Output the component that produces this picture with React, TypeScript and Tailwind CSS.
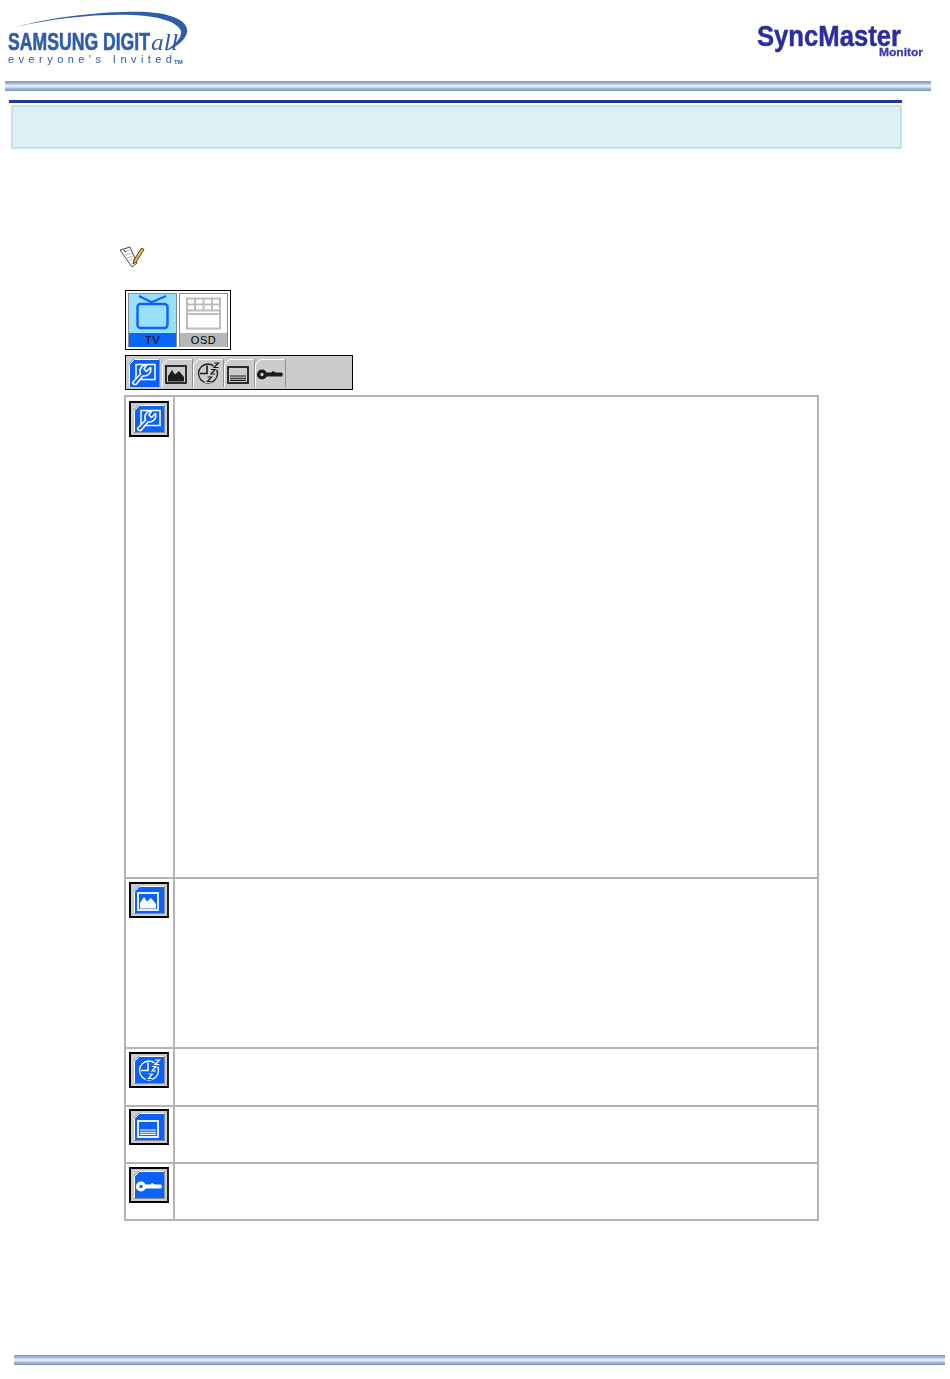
type IconKind = "setup" | "picture" | "timer" | "caption" | "key";

const ICONS: IconKind[] = ["setup", "picture", "timer", "caption", "key"];

const BLUE = "#0a62fb";

const ROWS: { kind: IconKind; height: string; pad: string }[] = [
  { kind: "setup", height: "h-[480px]", pad: "pt-[4px]" },
  { kind: "picture", height: "h-[170px]", pad: "pt-[3px]" },
  { kind: "timer", height: "h-[58px]", pad: "pt-[3px]" },
  { kind: "caption", height: "h-[57px]", pad: "pt-[2px]" },
  { kind: "key", height: "h-[57px]", pad: "pt-[3px]" },
];

function Glyph({ kind, color, bg }: { kind: IconKind; color: string; bg: string }) {
  if (kind === "setup") {
    return (
      <g>
        <rect x="7" y="5.5" width="19" height="15" fill="none" stroke={color} strokeWidth="1.5" />
        <path
          d="M5 25.5 L3.5 23.5 L11.5 15 C9.5 10 13 5.5 17.5 6 L15 10 L17.5 12.5 L21.5 8.5 C23 14 18.5 17.5 14 17 L7 25.5 Z"
          fill={bg}
          stroke={color}
          strokeWidth="1.6"
          strokeLinejoin="round"
        />
      </g>
    );
  }
  if (kind === "picture") {
    return (
      <g>
        <rect x="4" y="7" width="20" height="17" fill="none" stroke={color} strokeWidth="1.8" />
        <path d="M6 22.5 L6 17 L10 11 L13 15.5 L17 12 L22 18 L22 22.5 Z" fill={color} />
      </g>
    );
  }
  if (kind === "timer") {
    const zeds = "M21 4 H25.5 L21 8.5 H25.5 M18 10.5 H22 L18 15 H22 M14.5 18 H18.5 L14.5 22.5 H18.5";
    return (
      <g>
        <circle cx="15" cy="14.5" r="9.5" fill="none" stroke={color} strokeWidth="1.3" />
        <path d="M14 6.5 L14 14.5 L7 14.5" fill="none" stroke={color} strokeWidth="1.6" />
        <path d={zeds} fill="none" stroke={bg} strokeWidth="3" />
        <path d={zeds} fill="none" stroke={color} strokeWidth="1.2" />
      </g>
    );
  }
  if (kind === "caption") {
    return (
      <g>
        <rect x="4" y="8" width="20" height="16" fill="none" stroke={color} strokeWidth="1.8" />
        <path d="M6 17 H22 M6 19.2 H22 M6 21.4 H22" stroke={color} strokeWidth="1.1" />
      </g>
    );
  }
  return (
    <g>
      <circle cx="7" cy="15.5" r="3.4" fill="none" stroke={color} strokeWidth="3.4" />
      <path d="M11 13.5 H16 L18 12 L21 13.5 H27 L28 15.5 L27 17.5 H11 Z" fill={color} />
    </g>
  );
}

function Tab({ kind, active, raised }: { kind: IconKind; active?: boolean; raised?: boolean }) {
  const bg = active ? BLUE : "#cccccc";
  return (
    <svg width="31" height="28" viewBox="0 0 31 28" className="shrink-0">
      <path d="M0 28 V5 L5 0 H30 V28 Z" fill={bg} />
      <path d="M0.5 28 V5.5 L5.5 0.5 H30" fill="none" stroke="#ffffff" />
      <path d="M30.5 0 V28" stroke="#8f8f8f" />
      {raised && <path d="M0 27.5 H31" stroke="#8f8f8f" />}
      <Glyph kind={kind} color={active ? "#ffffff" : "#1c1c1c"} bg={bg} />
    </svg>
  );
}

function CellIcon({ kind }: { kind: IconKind }) {
  return (
    <div className="flex h-[36px] w-[40px] items-center justify-center border-2 border-black border-r-[#222222] bg-[#cccccc]">
      <Tab kind={kind} active raised />
    </div>
  );
}

function StripeBar({ width, margin }: { width: string; margin: string }) {
  return (
    <div
      className={`h-[10px] bg-[linear-gradient(to_bottom,#7893c6_0%,#a9bbdc_25%,#f4f6fb_50%,#a9bbdc_75%,#7191c6_100%)] ${width} ${margin}`}
    />
  );
}

function SamsungLogo() {
  return (
    <svg width="190" height="58" viewBox="0 0 190 58" className="blur-[0.4px]">
      <path
        d="M8 17 C55 5 105 1 140 2 C168 4 182 12 180 23 C177 32 168 38 158 41 C168 35 175 28 174 21 C170 11 150 6 125 5 C85 4 45 9 8 17 Z"
        fill="#2f5cab"
      />
      <text
        x="1"
        y="40"
        textLength="142"
        lengthAdjust="spacingAndGlyphs"
        fontFamily="Liberation Sans"
        fontWeight="700"
        fontSize="24"
        fill="#2f5cab"
        stroke="#2f5cab"
        strokeWidth="0.6"
      >
        SAMSUNG DIGIT
      </text>
      <text
        x="144"
        y="40"
        textLength="27"
        lengthAdjust="spacingAndGlyphs"
        fontFamily="Liberation Serif"
        fontStyle="italic"
        fontSize="24"
        fill="#2f5cab"
      >
        all
      </text>
      <text x="1" y="53" textLength="164" fontFamily="Liberation Sans" fontSize="11" fill="#2f5cab">
        everyone's Invited
      </text>
      <text x="167" y="54" fontFamily="Liberation Sans" fontWeight="700" fontSize="6" fill="#2f5cab">
        TM
      </text>
    </svg>
  );
}

function SyncMasterLogo() {
  return (
    <svg width="170" height="38" viewBox="0 0 170 38" className="blur-[0.5px]">
      <text
        x="2"
        y="25"
        textLength="144"
        lengthAdjust="spacingAndGlyphs"
        fontFamily="Liberation Sans"
        fontWeight="700"
        fontSize="30"
        fill="#2b2f9e"
        stroke="#2b2f9e"
        strokeWidth="0.5"
      >
        SyncMaster
      </text>
      <text
        x="124"
        y="35"
        textLength="44"
        lengthAdjust="spacingAndGlyphs"
        fontFamily="Liberation Sans"
        fontWeight="700"
        fontSize="11"
        fill="#3a3ea6"
        stroke="#3a3ea6"
        strokeWidth="0.3"
      >
        Monitor
      </text>
    </svg>
  );
}

function NoteIcon() {
  return (
    <svg width="26" height="22" viewBox="0 0 26 22">
      <path d="M1 4 L11 1 L18 17 L13 21 Z" fill="#ffffff" stroke="#4a4a4a" strokeWidth="1" />
      <path d="M5 6 L11 4 M6.5 9 L13 7 M8 12 L14 10 M9.5 15 L15 13" stroke="#a8a8a8" strokeWidth="0.8" />
      <path d="M4.5 4 L7 6" stroke="#c0392b" strokeWidth="1.2" />
      <path d="M15 14 L22.5 2 L25 3.5 L17 16 L14 18 Z" fill="#f4c430" stroke="#2b2b2b" strokeWidth="0.9" />
    </svg>
  );
}

function ModeTabs() {
  return (
    <div className="ml-[125px] flex h-[60px] w-[106px] gap-[2px] border border-black p-[2px]">
      <div className="flex w-[49px] flex-col border border-[#8c8c8c] bg-[#99e0ff]">
        <div className="flex-1">
          <svg viewBox="0 0 47 39" className="h-full w-full">
            <path d="M10 2 L24 9 M37 2 L21 9" fill="none" stroke={BLUE} strokeWidth="2" />
            <rect x="8.5" y="10" width="30" height="24" rx="3" fill="none" stroke={BLUE} strokeWidth="2.4" />
          </svg>
        </div>
        <div className="flex h-[14px] items-center justify-center bg-[#0a66f5] font-['Liberation_Sans',sans-serif] text-[11px] tracking-[0.5px] text-black">
          TV
        </div>
      </div>
      <div className="flex w-[49px] flex-col border border-[#8c8c8c] bg-white">
        <div className="flex-1">
          <svg viewBox="0 0 47 39" className="h-full w-full">
            <g fill="none" stroke="#bcbcbc" strokeWidth="2">
              <rect x="7" y="4.5" width="33" height="30" />
              <path d="M7 10.5 H40 M7 16.5 H40 M7 20 H40 M15 4.5 V16.5 M23.5 4.5 V16.5 M32 4.5 V16.5" />
            </g>
          </svg>
        </div>
        <div className="flex h-[14px] items-center justify-center bg-[#b8b8b8] font-['Liberation_Sans',sans-serif] text-[11px] tracking-[0.5px] text-black">
          OSD
        </div>
      </div>
    </div>
  );
}

export default function App() {
  return (
    <div className="h-[1379px] w-[950px] overflow-hidden bg-white">
      <header className="flex h-[81px] items-start justify-between">
        <div className="mt-[10px] ml-[7px]">
          <SamsungLogo />
        </div>
        <div className="mt-[21px] mr-[25px]">
          <SyncMasterLogo />
        </div>
      </header>
      <StripeBar width="w-[926px]" margin="ml-[5px]" />

      <div className="mt-[9px] ml-[9px] h-[3px] w-[893px] bg-[#1a3a94]" />
      <div className="mt-[2px] ml-[11px] h-[44px] w-[891px] border-2 border-[#c8e2e4] bg-[#dcf1f6]" />

      <div className="mt-[97px] ml-[119px] h-[22px]">
        <NoteIcon />
      </div>

      <div className="mt-[22px]">
        <ModeTabs />
      </div>

      <div className="mt-[5px] ml-[125px] flex h-[35px] w-[228px] items-end border border-black bg-[#cccccc] pb-[2px] pl-[3px] [&>svg:first-child]:mr-[2px]">
        {ICONS.map((kind, i) => (
          <Tab key={kind} kind={kind} active={i === 0} />
        ))}
      </div>

      <div className="mt-[5px] ml-[124px] w-[695px] border-2 border-[#b4b4b4]">
        {ROWS.map((row, i) => (
          <div
            key={row.kind}
            className={`flex ${row.height} ${i > 0 ? "border-t-2 border-[#b4b4b4]" : ""}`}
          >
            <div className={`w-[49px] border-r-2 border-[#b4b4b4] pl-[3px] ${row.pad}`}>
              <CellIcon kind={row.kind} />
            </div>
            <div className="flex-1" />
          </div>
        ))}
      </div>

      <div className="mt-[134px]">
        <StripeBar width="w-[931px]" margin="ml-[14px]" />
      </div>
    </div>
  );
}
